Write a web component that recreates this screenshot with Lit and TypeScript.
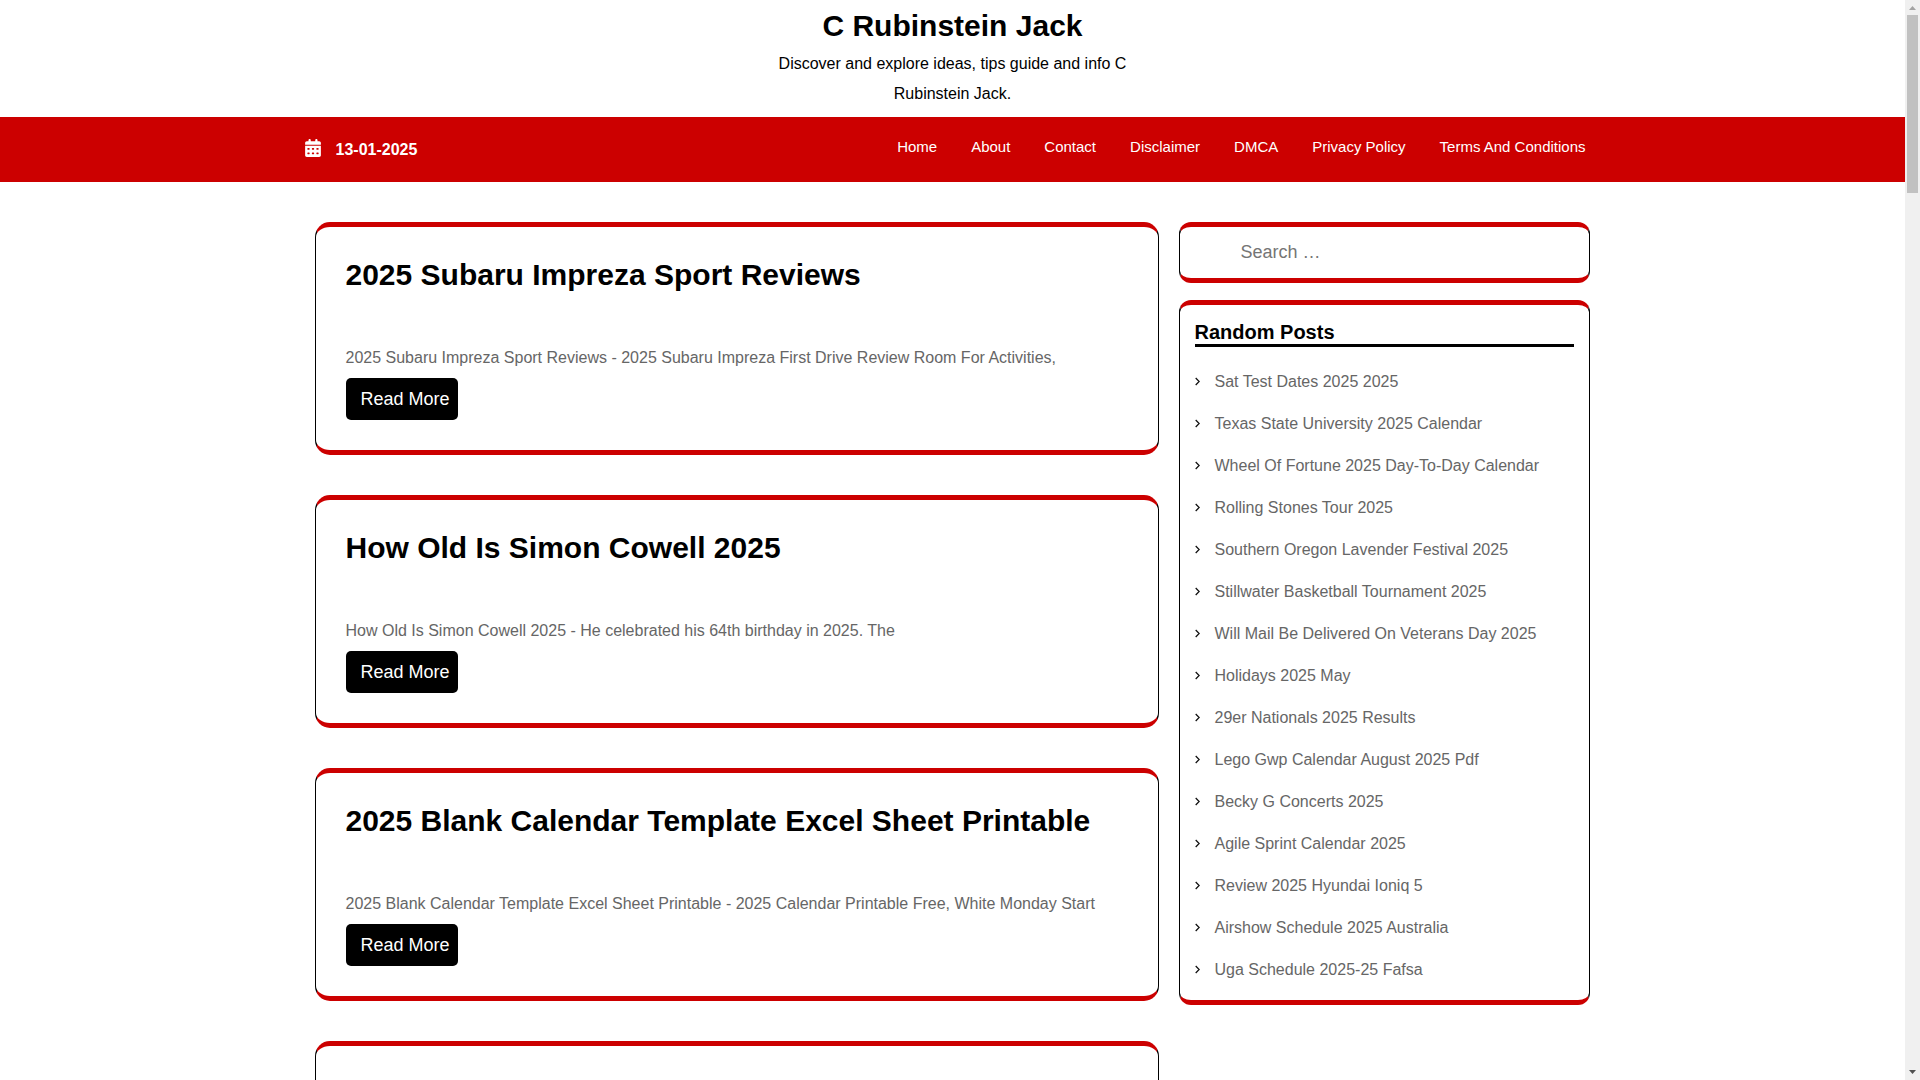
import { LitElement, html, css, svg } from "lit";
import { customElement } from "lit/decorators.js";

interface Post {
  title: string;
  excerpt: string;
}

const NAV = ["Home", "About", "Contact", "Disclaimer", "DMCA", "Privacy Policy", "Terms And Conditions"];

const POSTS: Post[] = [
  {
    title: "2025 Subaru Impreza Sport Reviews",
    excerpt: "2025 Subaru Impreza Sport Reviews - 2025 Subaru Impreza First Drive Review Room For Activities,",
  },
  {
    title: "How Old Is Simon Cowell 2025",
    excerpt: "How Old Is Simon Cowell 2025 - He celebrated his 64th birthday in 2025. The",
  },
  {
    title: "2025 Blank Calendar Template Excel Sheet Printable",
    excerpt: "2025 Blank Calendar Template Excel Sheet Printable - 2025 Calendar Printable Free, White Monday Start",
  },
];

const RANDOM = [
  "Sat Test Dates 2025 2025",
  "Texas State University 2025 Calendar",
  "Wheel Of Fortune 2025 Day-To-Day Calendar",
  "Rolling Stones Tour 2025",
  "Southern Oregon Lavender Festival 2025",
  "Stillwater Basketball Tournament 2025",
  "Will Mail Be Delivered On Veterans Day 2025",
  "Holidays 2025 May",
  "29er Nationals 2025 Results",
  "Lego Gwp Calendar August 2025 Pdf",
  "Becky G Concerts 2025",
  "Agile Sprint Calendar 2025",
  "Review 2025 Hyundai Ioniq 5",
  "Airshow Schedule 2025 Australia",
  "Uga Schedule 2025-25 Fafsa",
];

const HOLES = [64, 192, 320].flatMap((x) => [
  svg`<rect x=${x} y="256" width="64" height="48" rx="12" fill="#cc0000" />`,
  svg`<rect x=${x} y="384" width="64" height="48" rx="12" fill="#cc0000" />`,
]);

@customElement("app-root")
export class AppRoot extends LitElement {
  static styles = css`
    :host {
      display: block;
      font-family: "Liberation Sans", Arial, sans-serif;
      font-size: 16px;
      line-height: 30px;
      color: #000;
      background: #fff;
    }
    * {
      box-sizing: border-box;
    }
    a {
      color: inherit;
      text-decoration: none;
    }
    h1,
    h2,
    p,
    ul {
      margin: 0;
      padding: 0;
    }
    ul {
      list-style: none;
    }
    .window {
      display: grid;
      grid-template-columns: minmax(0, 1fr) 15px;
      height: 100vh;
      overflow: hidden;
    }
    .page {
      min-width: 0;
      overflow: hidden;
    }
    .brand {
      max-width: 400px;
      margin: 0 auto;
      padding: 3px 20px 8px;
      text-align: center;
    }
    .site-title {
      font-size: 30px;
      line-height: 45px;
      margin-bottom: 1px;
    }
    .bar {
      background: #cc0000;
      color: #fff;
    }
    .bar-inner {
      display: flex;
      justify-content: space-between;
      max-width: 1296px;
      margin: 0 auto;
      padding: 0 15px 0 0;
      min-height: 65px;
    }
    .date {
      display: flex;
      align-items: center;
      gap: 15px;
      font-weight: bold;
    }
    .date svg {
      width: 16px;
      height: 18px;
      margin-bottom: 4px;
    }
    .menu {
      display: flex;
      gap: 34px;
      padding-top: 15px;
      font-size: 15px;
    }
    .layout {
      display: grid;
      grid-template-columns: minmax(0, 844fr) minmax(0, 411fr);
      gap: 20px;
      align-items: start;
      max-width: 1276px;
      margin: 0 auto;
      padding: 40px 1px 0 0;
    }
    .posts {
      display: grid;
      gap: 40px;
    }
    .card {
      border: 1px solid #000;
      border-top: 5px solid #cc0000;
      border-bottom: 5px solid #cc0000;
      border-radius: 15px;
    }
    .post {
      min-height: 233px;
      padding: 25px 30px 30px;
    }
    .post h2 {
      font-size: 30px;
      line-height: 46px;
      margin-bottom: 45px;
    }
    .excerpt {
      color: #666;
      margin-bottom: 5px;
    }
    .more {
      display: block;
      width: fit-content;
      padding: 6px 8px 6px 15px;
      border-radius: 5px;
      background: #000;
      color: #fff;
      font-size: 18px;
    }
    .side {
      display: grid;
      gap: 17px;
    }
    .widget {
      border-radius: 12px;
    }
    .search {
      display: flex;
      padding: 0 15px;
    }
    .search input {
      flex: 1;
      min-width: 0;
      height: 51px;
      border: 0;
      padding: 0 15px 0 46px;
      background: none;
      outline: none;
      font-family: inherit;
      font-size: 18px;
      color: #000;
    }
    .search input::placeholder {
      color: #757575;
    }
    .random {
      padding: 15px 15px 9px;
    }
    .random h2 {
      font-size: 20px;
      line-height: 24px;
      border-bottom: 3px solid #000;
      margin-bottom: 14px;
    }
    .random li {
      display: flex;
      align-items: center;
      gap: 15px;
      height: 42px;
      color: #666;
    }
    .random svg {
      width: 5px;
      height: 9px;
      margin-bottom: 1px;
    }
    .scroll {
      display: flex;
      flex-direction: column;
      background: #f0f0f0;
    }
    .scroll svg {
      width: 15px;
      height: 15px;
    }
    .thumb {
      width: 11px;
      height: 178px;
      margin: 0 2px auto;
      background: #c1c1c1;
    }
  `;

  render() {
    return html`
      <div class="window">
        <div class="page">
          <header>
            <div class="brand">
              <h1 class="site-title"><a href="#">C Rubinstein Jack</a></h1>
              <p>Discover and explore ideas, tips guide and info C Rubinstein Jack.</p>
            </div>
            <div class="bar">
              <div class="bar-inner">
                <div class="date">
                  <svg viewBox="0 0 448 512" aria-hidden="true">
                    <path
                      fill="#fff"
                      d="M128 0c18 0 32 14 32 32v32h128V32c0-18 14-32 32-32s32 14 32 32v32h48c27 0 48 21 48 48v48H0v-48c0-27 21-48 48-48h48V32c0-18 14-32 32-32zM0 192h448v272c0 27-21 48-48 48H48c-27 0-48-21-48-48V192z"
                    />
                    ${HOLES}
                  </svg>
                  <span>13-01-2025</span>
                </div>
                <nav class="menu">${NAV.map((n) => html`<a href="#">${n}</a>`)}</nav>
              </div>
            </div>
          </header>
          <div class="layout">
            <main class="posts">
              ${POSTS.map(
                (p) => html`
                  <article class="card post">
                    <h2><a href="#">${p.title}</a></h2>
                    <p class="excerpt">${p.excerpt}</p>
                    <a class="more" href="#">Read More</a>
                  </article>
                `
              )}
              <article class="card post"></article>
            </main>
            <aside class="side">
              <form class="card widget search" role="search">
                <input type="search" aria-label="Search" placeholder="Search …" />
              </form>
              <section class="card widget random">
                <h2>Random Posts</h2>
                <ul>
                  ${RANDOM.map(
                    (r) => html`
                      <li>
                        <svg viewBox="0 0 5 9" aria-hidden="true">
                          <path d="M.7 1 4.2 4.5.7 8" fill="none" stroke="#111" stroke-width="1.3" />
                        </svg>
                        <a href="#">${r}</a>
                      </li>
                    `
                  )}
                </ul>
              </section>
            </aside>
          </div>
        </div>
        <div class="scroll" aria-hidden="true">
          <svg viewBox="0 0 15 15"><path d="M4 10h7L7.5 6z" fill="#a3a3a3" /></svg>
          <div class="thumb"></div>
          <svg viewBox="0 0 15 15"><path d="M4 5h7L7.5 9z" fill="#505050" /></svg>
        </div>
      </div>
    `;
  }
}
